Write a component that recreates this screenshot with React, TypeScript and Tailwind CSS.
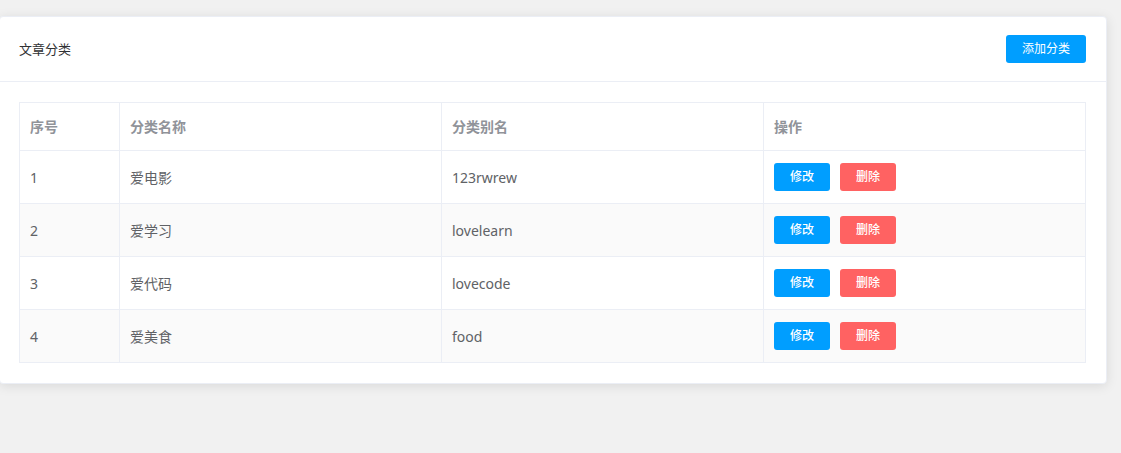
const categories = [
  { id: 1, name: "爱电影", alias: "123rwrew" },
  { id: 2, name: "爱学习", alias: "lovelearn" },
  { id: 3, name: "爱代码", alias: "lovecode" },
  { id: 4, name: "爱美食", alias: "food" },
];

export default function App() {
  return (
    <main className="min-h-screen overflow-x-hidden bg-[#f1f1f1] pt-4 pr-3.5 pb-16 font-['Noto_Sans','Noto_Sans_CJK_SC',sans-serif] text-sm text-[#606266]">
      <section className="-ml-px rounded border border-[#ebeef5] bg-white shadow-[0_2px_12px_0_rgba(0,0,0,0.1)]">
        <header className="flex items-center justify-between border-b border-[#ebeef5] py-[18px] pr-5 pl-[19px]">
          <h1 className="text-[13px] text-[#303133]">文章分类</h1>
          <button type="button" className="h-7 rounded-[3px] bg-[#009eff] px-4 text-xs text-white">
            添加分类
          </button>
        </header>
        <div className="py-5 pr-5 pl-[19px]">
          <table className="w-full table-fixed border-collapse text-left">
            <colgroup>
              <col className="w-[100px]" />
              <col />
              <col />
              <col />
            </colgroup>
            <thead>
              <tr className="h-12 text-[#909399]">
                {["序号", "分类名称", "分类别名", "操作"].map((title) => (
                  <th key={title} className="border border-[#ebeef5] px-2.5 font-bold">{title}</th>
                ))}
              </tr>
            </thead>
            <tbody>
              {categories.map((item) => (
                <tr key={item.id} className="h-[53px] even:bg-[#fafafa]">
                  <td className="border border-[#ebeef5] px-2.5 pt-0.5">{item.id}</td>
                  <td className="border border-[#ebeef5] px-2.5 pt-0.5">{item.name}</td>
                  <td className="border border-[#ebeef5] px-2.5 pt-0.5">{item.alias}</td>
                  <td className="border border-[#ebeef5] px-2.5">
                    <div className="flex gap-2.5 text-xs font-medium text-white">
                      <button type="button" className="h-7 rounded-[3px] bg-[#009eff] px-4">修改</button>
                      <button type="button" className="h-7 rounded-[3px] bg-[#ff6262] px-4">删除</button>
                    </div>
                  </td>
                </tr>
              ))}
            </tbody>
          </table>
        </div>
      </section>
    </main>
  );
}
